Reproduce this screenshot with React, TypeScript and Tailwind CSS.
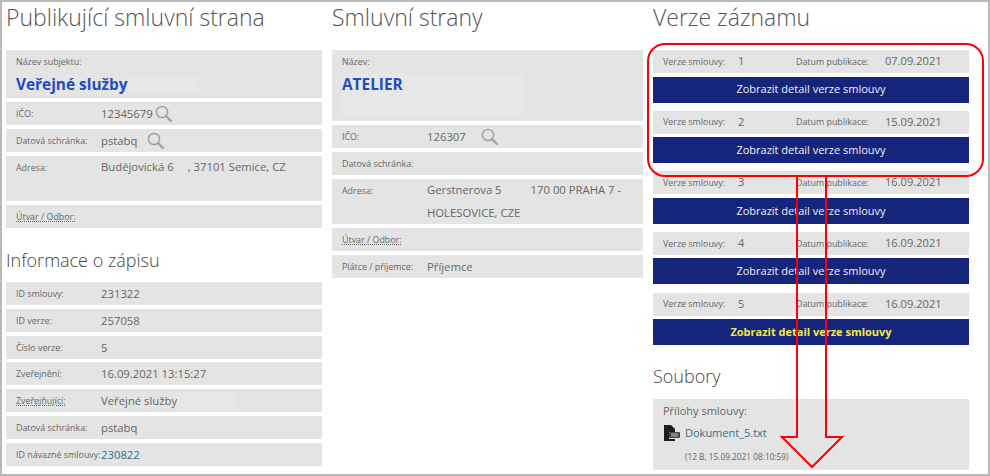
import React from "react";

const font = { fontFamily: '"Open Sans", "Liberation Sans", sans-serif' };

function Lens({ cls = "" }: { cls?: string }) {
  return (
    <svg className={cls} width="17" height="17" viewBox="0 0 17 17" fill="none" stroke="#a0a0a0">
      <circle cx="7" cy="7" r="5.6" strokeWidth="1.5" />
      <path d="M11.2 11.2L16 16" strokeWidth="2.2" strokeLinecap="round" />
    </svg>
  );
}

function Row({ label, value, valueClass = "", icon, iconGap = "ml-[2px]", labelClass = "", h = "h-[23px]" }: {
  label: string; value?: React.ReactNode; valueClass?: string; icon?: boolean; iconGap?: string; labelClass?: string; h?: string;
}) {
  return (
    <div className={`flex ${h} bg-[#e4e4e4] pl-[10px] items-start`}>
      <div className="w-[85px] shrink-0 pt-[4px] text-[8.9px] leading-[15px] text-[#666] whitespace-nowrap">
        <span className={labelClass}>{label}</span>
      </div>
      {value !== undefined && (
        <div className={`text-[11.3px] leading-[23px] text-[#666] flex items-center whitespace-nowrap ${valueClass}`}>
          {value}
          {icon && <Lens cls={iconGap} />}
        </div>
      )}
    </div>
  );
}

function Heading({ children, cls = "" }: { children: React.ReactNode; cls?: string }) {
  return <h2 className={`text-[23px] leading-[30px] font-light text-[#555] ${cls}`}>{children}</h2>;
}

function Version({ n, date, active }: { n: number; date: string; active?: boolean }) {
  return (
    <div className="flex flex-col gap-[3.5px]">
      <div className="flex h-[23px] items-center bg-[#e4e4e4] pl-[10px] text-[#666]">
        <span className="w-[75px] text-[8.9px]">Verze smlouvy:</span>
        <span className="w-[58px] text-[11.1px]">{n}</span>
        <span className="w-[89px] text-[8.9px]">Datum publikace:</span>
        <span className="text-[11.1px]">{date}</span>
      </div>
      <div className={`flex h-[26px] items-center justify-center bg-[#15257c] text-[11px] ${active ? "font-bold text-[#f2e84a]" : "text-[#f0f0f5]"}`}>
        Zobrazit detail verze smlouvy
      </div>
    </div>
  );
}

const Blur = ({ w, cls = "h-[16px]" }: { w: string; cls?: string }) => <span className={`inline-block ${w} ${cls} bg-[#e7e7e7]`} />;

export default function App() {
  return (
    <div style={font} className="relative flex h-[476px] w-[990px] gap-[10px] overflow-hidden border-2 border-[#b9b9b9] bg-white pl-[4px]">
      <div className="flex w-[316px] shrink-0 flex-col">
        <Heading cls="mb-[18px]">Publikující smluvní strana</Heading>
        <div className="flex flex-col gap-[4px]">
          <div className="h-[48px] bg-[#e4e4e4] pl-[10px]">
            <div className="pt-[4px] text-[8.9px] leading-[15px] text-[#666]">Název subjektu:</div>
            <div className="mt-[6px] flex items-center text-[15.4px] font-bold leading-[20px] text-[#1c4fc0]">Veřejné služby<Blur w="w-[70px]" /></div>
          </div>
          <Row label="IČO:" value="12345679" icon />
          <Row label="Datová schránka:" value="pstabq" icon iconGap="ml-[10px]" />
          <Row label="Adresa:" value={<>Budějovická 6<span className="ml-[14px]">, 37101 Semice, CZ</span></>} valueClass="-mt-[1px]" h="h-[45px]" />
          <Row label="Útvar / Odbor:" labelClass="underline decoration-dotted" />
        </div>
        <Heading cls="mt-[17px] mb-[7px] !text-[18px] !text-[#444]">Informace o zápisu</Heading>
        <div className="flex flex-col gap-[3.83px]">
          <Row label="ID smlouvy:" value="231322" />
          <Row label="ID verze:" value="257058" />
          <Row label="Číslo verze:" value="5" />
          <Row label="Zveřejnění:" value="16.09.2021 13:15:27" />
          <Row label="Zveřejňující:" labelClass="underline decoration-dotted" value={<>Veřejné služby<Blur w="w-[58px]" /></>} />
          <Row label="Datová schránka:" value="pstabq" />
          <Row label="ID návazné smlouvy:" value={<span className="text-[#33708f]">230822</span>} />
        </div>
      </div>

      <div className="flex w-[311px] shrink-0 flex-col">
        <Heading cls="mb-[18px]">Smluvní strany</Heading>
        <div className="flex flex-col gap-[4px]">
          <div className="h-[71px] bg-[#e4e4e4] pl-[10px]">
            <div className="pt-[4px] text-[8.9px] leading-[15px] text-[#666]">Název:</div>
            <div className="mt-[5px] flex h-[42px] w-[182px] items-start bg-[#e7e7e7] pt-[1px] text-[15.4px] font-bold leading-[20px] text-[#1c4fc0]">ATELIER</div>
          </div>
          <Row label="IČO:" value="126307" icon iconGap="ml-[15px]" />
          <Row label="Datová schránka:" />
          <div className="flex h-[45px] bg-[#e4e4e4] pl-[10px]">
            <div className="w-[85px] shrink-0 pt-[4px] text-[8.9px] leading-[15px] text-[#666]">Adresa:</div>
            <div className="-mt-[1px] text-[11.3px] leading-[23px] text-[#666]">Gerstnerova 5<span className="ml-[29px]">170 00 PRAHA 7 -</span><br />HOLESOVICE, CZE</div>
          </div>
          <Row label="Útvar / Odbor:" labelClass="underline decoration-dotted" />
          <Row label="Plátce / příjemce:" value="Příjemce" />
        </div>
      </div>

      <div className="flex w-[316px] shrink-0 flex-col">
        <Heading cls="mb-[18px]">Verze záznamu</Heading>
        <div className="flex flex-col gap-[8.17px]">
          <Version n={1} date="07.09.2021" />
          <Version n={2} date="15.09.2021" />
          <Version n={3} date="16.09.2021" />
          <Version n={4} date="16.09.2021" />
          <Version n={5} date="16.09.2021" active />
        </div>
        <h2 className="mt-[17px] mb-[9px] text-[18px] font-light leading-[28px] text-[#444]">Soubory</h2>
        <div className="h-[71px] bg-[#e4e4e4] pl-[10px] text-[#666]">
          <div className="pt-[3px] text-[11px] leading-[18px]">Přílohy smlouvy:</div>
          <div className="mt-[4px] flex items-center gap-[4px]">
            <svg width="18" height="18" viewBox="0 0 18 18">
              <path d="M1 1h7l4 4v3H6v7h6v2H1z" fill="#1d1d1d" />
              <rect x="6" y="8" width="11" height="6" rx="1" fill="#444" />
              <path d="M8 10h7M8 12h7" stroke="#bbb" strokeWidth="1" />
            </svg>
            <span className="text-[11px] text-[#33708f]">Dokument_5.txt</span>
          </div>
          <div className="mt-[9px] pl-[22px] text-[8.3px] leading-[12px] text-[#666]">(12 B, 15.09.2021 08:10:59)</div>
        </div>
      </div>

      <div className="pointer-events-none absolute left-[645px] top-[41px] h-[134px] w-[337px] rounded-[18px] border-2 border-[#ff0000]" />
      <svg className="pointer-events-none absolute left-[778px] top-[172px]" width="66" height="296" viewBox="0 0 66 296">
        <path d="M17 2V263H2L32 293L62 263H46V2" fill="none" stroke="#ff0000" strokeWidth="2" />
      </svg>
    </div>
  );
}
